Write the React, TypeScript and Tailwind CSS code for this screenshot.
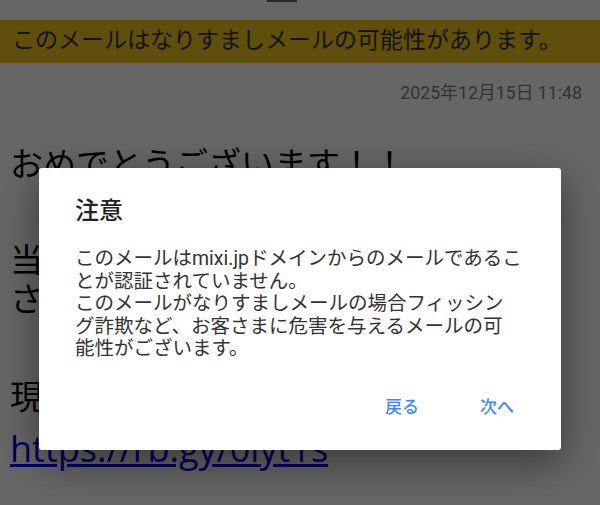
const font = { fontFamily: '"Roboto", "Noto Sans CJK JP", sans-serif' };
const linkFont = { fontFamily: '"Open Sans", "Noto Sans CJK JP", sans-serif' };

const WarningDialog = () => (
  <div className="w-[522px] h-[282px] bg-white rounded-[3px] shadow-[0_12px_40px_rgba(0,0,0,0.45)] flex flex-col">
    <div className="px-[36px] pt-[28px]">
      <h2 className="text-[24px] leading-[30px] font-medium text-[#212121]">注意</h2>
      <div className="mt-[22px] text-[19.5px] leading-[22.5px] text-[#333] whitespace-nowrap">
        <p>このメールはmixi.jpドメインからのメールであるこ</p>
        <p>とが認証されていません。</p>
        <p>このメールがなりすましメールの場合フィッシン</p>
        <p>グ詐欺など、お客さまに危害を与えるメールの可</p>
        <p>能性がございます。</p>
      </div>
    </div>
    <div className="mt-auto mb-[24px] pr-[32px] flex justify-end gap-[31px]">
      <button type="button" className="h-[36px] min-w-[64px] px-[15px] text-[17px] font-medium text-[#4285f4]">
        戻る
      </button>
      <button type="button" className="h-[36px] min-w-[64px] px-[15px] text-[17px] font-medium text-[#4285f4]">
        次へ
      </button>
    </div>
  </div>
);

export default function App() {
  return (
    <div className="relative h-[505px] w-[600px] overflow-hidden bg-white" style={font}>
      {/* scrolled page */}
      <div className="h-[20px] relative">
        <div className="absolute top-0 left-[267px] w-[30px] h-[2px] bg-[#666]" />
      </div>
      <div className="h-[43px] bg-[#eec41e] px-[12px] flex items-center text-[23px] text-[#333] whitespace-nowrap">
        このメールはなりすましメールの可能性があります。
      </div>
      <div className="mt-[18px] pr-[18px] text-right text-[17.75px] leading-[24px] text-[#808080]">
        2025年12月15日 11:48
      </div>
      <div className="mt-[40px] px-[10px] text-[33px] leading-[39px] text-black whitespace-nowrap">
        <p>おめでとうございます！！</p>
        <p className="mt-[57px]">
          当選のお知らせです。
          <br />
          さっそくご確認ください。
        </p>
        <p className="mt-[59px]">現在のステータス：</p>
        <a href="#" className="block mt-[12px] text-[36px] text-[#0000ee] underline" style={linkFont}>
          https://rb.gy/0lyt1s
        </a>
      </div>

      {/* overlay */}
      <div className="absolute inset-0 bg-black/60 flex justify-center pt-[168px]">
        <WarningDialog />
      </div>
    </div>
  );
}
